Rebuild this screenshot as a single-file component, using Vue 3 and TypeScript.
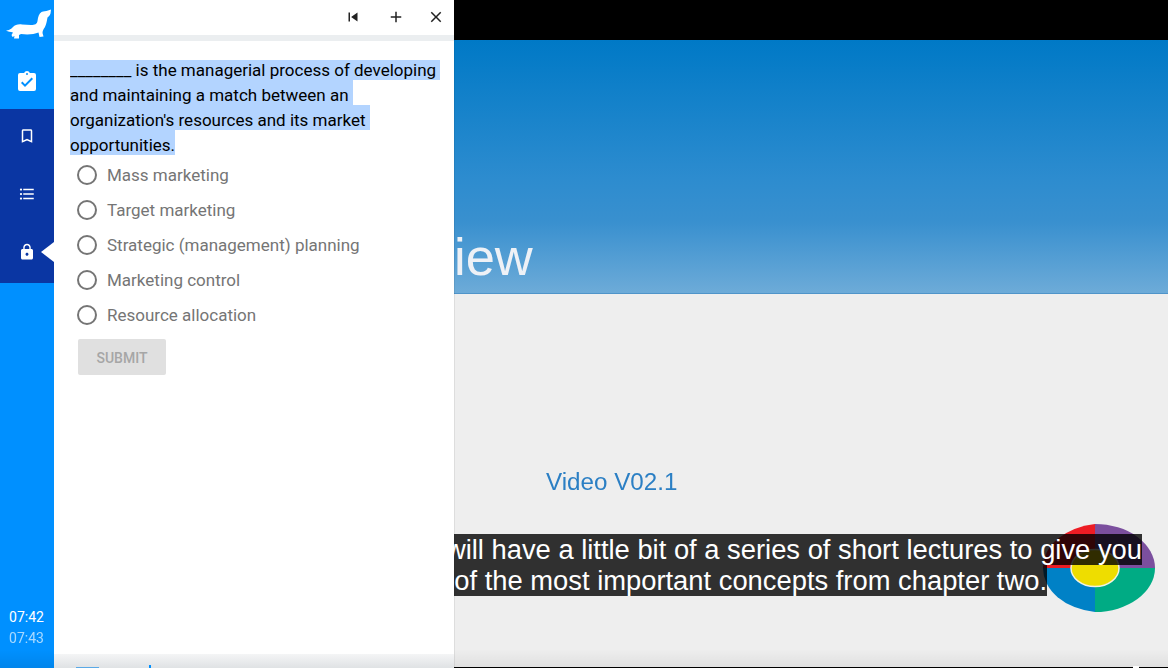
<script setup lang="ts">
import { onMounted, ref } from 'vue'

const options: string[] = [
  'Mass marketing',
  'Target marketing',
  'Strategic (management) planning',
  'Marketing control',
  'Resource allocation',
]
const question = ref<HTMLElement | null>(null)

onMounted(() => {
  const sel = window.getSelection()
  if (sel && question.value) sel.selectAllChildren(question.value)
})
</script>

<template>
  <div class="page">
    <aside class="rail">
      <div class="logo-box">
        <svg class="logo" viewBox="0 0 54 40" width="54" height="40">
          <path fill="#fff" d="M6 30.500 C9 30.500 11 29 13 27 C15 25 18 24 22 24.500 L31 25 C35 25 37 24 37.500 21 C38 17 39 13.500 41.500 12 C43.500 11 46 11.500 48 10.500 L51 9.500 L50.500 13.500 C50 15.500 48.500 16.500 47.500 17.500 C47 20 46.500 24 45 27 C43.500 29 42.500 31 42.500 33 L43.500 36.500 L39.500 37 L38.500 32.500 C34 34.500 27 35 21 34 L19 35 L19 38.500 L14 38.500 L14.500 36 L12.500 37 L11.500 35 L13 32.500 C10.500 32 8 31.500 6 30.500 Z" />
        </svg>
      </div>
      <div class="tab">
        <svg viewBox="0 0 24 24" width="24" height="24"><path fill="#fff" d="M19 3h-4.180C14.400 1.840 13.300 1 12 1s-2.400.84-2.820 2H5a2 2 0 0 0-2 2v14a2 2 0 0 0 2 2h14a2 2 0 0 0 2-2V5a2 2 0 0 0-2-2zm-7 0a1 1 0 1 1 0 2 1 1 0 0 1 0-2zm-2 14-4-4 1.410-1.410L10 14.170l6.590-6.590L18 9l-8 8z" /></svg>
      </div>
      <div class="band">
        <div class="band-item">
          <svg viewBox="0 0 24 24" width="18" height="18"><path fill="#fff" d="M17 3H7c-1.100 0-2 .9-2 2v16l7-3 7 3V5c0-1.100-.9-2-2-2zm0 15-5-2.180L7 18V5h10v13z" /></svg>
        </div>
        <div class="band-item">
          <svg viewBox="0 0 24 24" width="18" height="18"><path fill="#fff" d="M4 10.500a1.500 1.500 0 1 0 0 3 1.500 1.500 0 0 0 0-3zm0-6a1.500 1.500 0 1 0 0 3 1.500 1.500 0 0 0 0-3zm0 12a1.500 1.500 0 1 0 0 3 1.500 1.500 0 0 0 0-3zM7 19h14v-2H7v2zm0-6h14v-2H7v2zm0-8v2h14V5H7z" /></svg>
        </div>
        <div class="band-item band-current">
          <svg viewBox="0 0 24 24" width="18" height="18"><path fill="#fff" d="M18 8h-1V6c0-2.760-2.240-5-5-5S7 3.240 7 6v2H6c-1.100 0-2 .9-2 2v10c0 1.100.9 2 2 2h12c1.100 0 2-.9 2-2V10c0-1.100-.9-2-2-2zm-6 9c-1.100 0-2-.9-2-2s.9-2 2-2 2 .9 2 2-.9 2-2 2zm3.100-9H8.900V6c0-1.710 1.390-3.100 3.100-3.100s3.100 1.390 3.100 3.100v2z" /></svg>
        </div>
      </div>
      <div class="clock">
        <div>07:42</div>
        <div class="clock-dim">07:43</div>
      </div>
      <div class="rail-shade"></div>
    </aside>

    <section class="panel">
      <header class="toolbar">
        <svg class="tool-skip" viewBox="0 0 24 24" width="18" height="18"><path fill="#222" d="M6 6h2v12H6zm3.500 6 8.500 6V6z" /></svg>
        <svg class="tool-plus" viewBox="0 0 24 24" width="18" height="18"><path fill="#222" d="M19 13h-6v6h-2v-6H5v-2h6V5h2v6h6v2z" /></svg>
        <svg viewBox="0 0 24 24" width="18" height="18"><path fill="#222" d="M19 6.410 17.590 5 12 10.590 6.410 5 5 6.410 10.590 12 5 17.590 6.410 19 12 13.410 17.590 19 19 17.590 13.410 12z" /></svg>
      </header>
      <div class="body">
        <div class="question-box">
          <p ref="question" class="question"><span class="question-text">________ is the managerial process of developing and maintaining a match between an organization's resources and its market opportunities.</span></p>
        </div>
        <ul class="options">
          <li v-for="o in options" :key="o" class="option">
            <span class="radio"></span>
            <span>{{ o }}</span>
          </li>
        </ul>
        <button class="submit" type="button" disabled>SUBMIT</button>
      </div>
      <footer class="footer">
        <span class="foot-bar"></span>
        <span class="foot-tick"></span>
      </footer>
    </section>

    <main class="video">
      <div class="slide-top">
        <span class="slide-title">iew</span>
      </div>
      <div class="slide-bottom">
        <div class="version">Video V02.1</div>
      </div>
      <svg class="wheel" viewBox="0 0 112 88" width="112" height="88">
        <path fill="#ed1c24" d="M52 44V0A60 44 0 0 0 0 44z" />
        <path fill="#7b4f9e" d="M52 44V0A60 44 0 0 1 112 44z" />
        <path fill="#0081c6" d="M52 44V88A60 44 0 0 1 0 44z" />
        <path fill="#00ab84" d="M52 44V88A60 44 0 0 0 112 44z" />
        <ellipse cx="52" cy="44" rx="24" ry="18.500" fill="#eedd00" stroke="#f2f2e0" stroke-width="1.500" />
      </svg>
      <div class="captions">
        <div class="cap-line cap-first"><span>will have a little bit of a series of short lectures to give you</span></div>
        <div class="cap-line cap-second"><span>of the most important concepts from chapter two.</span></div>
      </div>
      <div class="shade"></div>
      <div class="seek"><span class="seek-knob"></span></div>
    </main>
  </div>
</template>

<style>
html, body { margin: 0; padding: 0; overflow: hidden; }
</style>

<style scoped>
.page {
  display: flex;
  width: 1168px;
  height: 668px;
  overflow: hidden;
  font-family: Roboto, "Liberation Sans", sans-serif;
}
.rail {
  position: relative;
  flex: 0 0 54px;
  display: flex;
  flex-direction: column;
  background: #0090ff;
  color: #fff;
}
.logo-box { height: 54px; flex: none; }
.logo { display: block; }
.tab { height: 55px; display: flex; align-items: center; justify-content: center; flex: none; padding-right: 1px; }
.band {
  background: #0a36a3;
  display: flex;
  flex-direction: column;
  gap: 4px;
  height: 174px;
  flex: none;
}
.band-item {
  height: 54px;
  flex: none;
  display: flex;
  align-items: center;
  justify-content: center;
  padding-right: 1px;
  position: relative;
}
.band-current::after {
  content: "";
  position: absolute;
  right: 0;
  top: 17px;
  border-style: solid;
  border-width: 10px 13px 10px 0;
  border-color: transparent #fff transparent transparent;
}
.clock {
  margin-top: auto;
  margin-bottom: 19px;
  padding-right: 1px;
  font-size: 14px;
  line-height: 21px;
  text-align: center;
}
.clock-dim { opacity: .65; }
.rail-shade {
  position: absolute;
  left: 0;
  right: 0;
  bottom: 0;
  height: 18px;
  background: linear-gradient(rgba(0, 0, 0, 0), rgba(0, 0, 0, .08));
}

.panel {
  position: relative;
  z-index: 1;
  flex: 0 0 400px;
  display: flex;
  flex-direction: column;
  background: #fff;
  color: #000;
  box-shadow: 1px 0 0 rgba(0, 0, 0, .07);
}
.toolbar {
  height: 35px;
  flex: none;
  display: flex;
  align-items: center;
  justify-content: flex-end;
  padding: 0 9px 1px 0;
  box-sizing: border-box;
}
.tool-skip { margin-right: 25px; }
.tool-plus { margin-right: 22px; }
.body {
  flex: 1;
  border-top: 6px solid #ebeef0;
  padding: 19px 12px 0 16px;
}
.question-box { height: 95px; display: flow-root; }
.question {
  margin: -5px 0 0;
  font-size: 17px;
  line-height: 25px;
  color: #000;
  clip-path: inset(5px 0 0 0);
}
.question-text {
  line-height: 19px;
  vertical-align: -3px;
}
.question::selection,
.question-text::selection { background: #b3d4ff; color: #000; }
.options { list-style: none; margin: 0; padding: 2px 0 0 7px; }
.option {
  display: flex;
  align-items: center;
  height: 35px;
  font-size: 17px;
  color: #757575;
}
.radio {
  width: 20px;
  height: 20px;
  box-sizing: border-box;
  border: 2px solid #757575;
  border-radius: 50%;
  margin-right: 10px;
  flex: none;
}
.submit {
  display: block;
  margin: 7px 0 0 8px;
  width: 88px;
  height: 36px;
  border: 0;
  border-radius: 2px;
  background: #e0e0e0;
  color: #a6a6a6;
  font: 500 14px Roboto, sans-serif;
  padding: 1px 0 0;
}
.footer {
  height: 14px;
  flex: none;
  background: linear-gradient(#f4f5f6, #dfe2e4);
  position: relative;
  overflow: hidden;
}
.foot-bar { position: absolute; left: 22px; top: 13px; width: 23px; height: 1px; background: #5aa9e6; }
.foot-tick { position: absolute; left: 95px; top: 11px; width: 2px; height: 3px; background: #0090ff; }

.video {
  position: relative;
  flex: 1;
  min-width: 0;
  overflow: hidden;
  background: #000;
  padding-top: 40px;
  box-sizing: border-box;
  display: flex;
  flex-direction: column;
}
.slide-top {
  height: 254px;
  flex: none;
  box-sizing: border-box;
  border-bottom: 1px solid #4f94c9;
  background: linear-gradient(#0079c6 0%, #2d8ccf 55%, #3990cf 72%, #6dabd8 100%);
  position: relative;
}
.slide-title {
  position: absolute;
  left: 0;
  top: 185px;
  font: 52.500px/64px "Liberation Sans", sans-serif;
  color: #eef1f6;
  filter: blur(.6px);
}
.slide-bottom {
  flex: 1;
  background: #eeeeee;
  border-bottom: 1px solid #000;
  position: relative;
}
.version {
  position: absolute;
  left: 92px;
  top: 173px;
  font: 24.200px/30px "Liberation Sans", sans-serif;
  color: #2b7fc4;
  filter: blur(.4px);
}
.wheel { position: absolute; left: 589px; top: 524px; filter: blur(.4px); }
.captions {
  position: absolute;
  left: 0;
  right: 0;
  top: 534px;
  font: 27.350px/31px "Liberation Sans", sans-serif;
  color: #fff;
  white-space: nowrap;
}
.cap-line { height: 31px; display: flex; justify-content: flex-end; }
.cap-first { padding-right: 26px; }
.cap-second { padding-right: 121px; }
.cap-line span {
  flex: none;
  background: rgba(0, 0, 0, .8);
  height: 31px;
}
.shade {
  position: absolute;
  left: 0;
  right: 0;
  bottom: 1px;
  height: 18px;
  background: linear-gradient(rgba(0, 0, 0, 0), rgba(0, 0, 0, .06));
}
.seek { position: absolute; left: 0; right: 0; bottom: 0; height: 1px; }
.seek-knob { position: absolute; left: 679px; top: -1px; width: 6px; height: 2px; background: #fff; }
</style>
